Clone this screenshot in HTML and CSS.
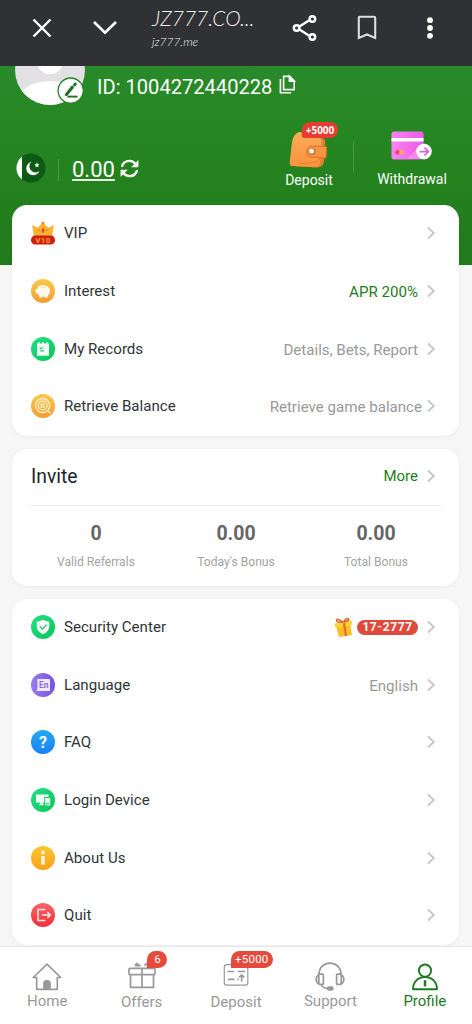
FILE: index.html
```html
<!DOCTYPE html>
<html lang="en">
<head>
<meta charset="utf-8">
<title>Profile</title>
<link rel="stylesheet" href="styles.css">
</head>
<body>
<svg class="defs" width="0" height="0">
  <defs>
    <linearGradient id="gold" x1="0" y1="0" x2="0" y2="1"><stop offset="0" stop-color="#f8c94a"/><stop offset="1" stop-color="#f69c35"/></linearGradient>
    <linearGradient id="amber" x1="0" y1="0" x2="0" y2="1"><stop offset="0" stop-color="#fcc52d"/><stop offset="1" stop-color="#fba11c"/></linearGradient>
    <linearGradient id="green" x1="0" y1="0" x2="1" y2="1"><stop offset="0" stop-color="#25df85"/><stop offset="1" stop-color="#08c558"/></linearGradient>
    <linearGradient id="violet" x1="0" y1="0" x2="1" y2="0"><stop offset="0" stop-color="#9a7cf5"/><stop offset="1" stop-color="#7452df"/></linearGradient>
    <linearGradient id="blue" x1="0" y1="0" x2="0" y2="1"><stop offset="0" stop-color="#22aaf2"/><stop offset="1" stop-color="#1b7ffb"/></linearGradient>
    <linearGradient id="red" x1="0" y1="0" x2="0" y2="1"><stop offset="0" stop-color="#fc6468"/><stop offset="1" stop-color="#f52e37"/></linearGradient>
    <linearGradient id="wallet" x1="0" y1="0" x2="0" y2="1"><stop offset="0" stop-color="#f8ad59"/><stop offset="1" stop-color="#ff913e"/></linearGradient>
    <linearGradient id="pink" x1="0" y1="0" x2="1" y2="0"><stop offset="0" stop-color="#fb82f2"/><stop offset="1" stop-color="#ea5be9"/></linearGradient>
    <symbol id="chev" viewBox="0 0 10 14"><path d="M2 1.5 7.8 7 2 12.5" fill="none" stroke="#c6c6c6" stroke-width="1.8"/></symbol>
  </defs>
</svg>

<header class="bar">
  <svg class="bar-close" width="20" height="20" viewBox="0 0 20 20"><path d="M1.5 1.5 18.5 18.5M18.5 1.5 1.5 18.5" stroke="#fff" stroke-width="2.4"/></svg>
  <svg class="bar-down" width="26" height="16" viewBox="0 0 26 16"><path d="M2 2 13 12.6 24 2" fill="none" stroke="#fff" stroke-width="2.7"/></svg>
  <div class="bar-site"><div class="bar-title">JZ777.CO...</div><div class="bar-url">jz777.me</div></div>
  <svg class="bar-share" width="26" height="28" viewBox="0 0 26 28" fill="none" stroke="#fff" stroke-width="2.4"><path d="M7.5 12.4 17.6 6M7.5 15.6 17.6 22"/><circle cx="4.6" cy="14" r="2.8"/><circle cx="20.4" cy="5" r="2.8"/><circle cx="20.4" cy="23" r="2.8"/></svg>
  <svg class="bar-mark" width="20" height="26" viewBox="0 0 20 26"><path d="M1.8 2.8Q1.8 1.8 2.8 1.8H17.2Q18.2 1.8 18.2 2.8V23L10 19.5 1.8 23Z" fill="none" stroke="#dedede" stroke-width="2.1"/></svg>
  <svg class="bar-more" width="8" height="24" viewBox="0 0 8 24" fill="#fff"><circle cx="4" cy="4.2" r="2.9"/><circle cx="4" cy="12" r="2.9"/><circle cx="4" cy="19.8" r="2.9"/></svg>
</header>

<section class="hero">
  <div class="user">
    <svg class="avatar" width="72" height="40" viewBox="0 0 72 40">
      <defs><clipPath id="face"><circle cx="35" cy="4" r="35"/></clipPath></defs>
      <g clip-path="url(#face)"><path fill="#e2e0e2" d="M0 0H72V40H0Z"/><circle cx="35" cy="-5" r="13.2" fill="#fff"/><ellipse cx="35" cy="35" rx="32" ry="20" fill="#fff"/></g>
      <circle cx="55.7" cy="24.6" r="12.6" fill="#fff" stroke="#24802a" stroke-width="1.3"/>
      <path d="M51.4 28.6 57.3 21.2" stroke="#236f27" stroke-width="3.1" stroke-linecap="round"/><path d="M59.6 18.8 60.2 18" stroke="#236f27" stroke-width="3" stroke-linecap="round"/><path d="M52.5 30.6H62.5" stroke="#236f27" stroke-width="1.9"/>
    </svg>
    <span class="uid">ID: 1004272440228</span>
    <svg class="copy" width="17" height="19" viewBox="0 0 17 19" fill="none" stroke="#fff" stroke-width="1.6"><path d="M4.6 1.4H10.8L15.2 5.8V14.6H4.6Z"/><path d="M10.4 1.4V6.2H15.2Z" fill="#fff"/><path d="M1.4 4V17.8H12.2"/></svg>
  </div>
  <div class="wallet">
    <svg class="flag" width="30" height="30" viewBox="0 0 30 30"><defs><clipPath id="disc"><circle cx="15" cy="15" r="14.6"/></clipPath></defs><g clip-path="url(#disc)"><path fill="#0c5a13" d="M0 0H30V30H0Z"/><path fill="#fff" d="M0 0H6V30H0Z"/></g><path d="M15.5 8.8A6.8 6.8 0 1 0 23.4 18 6 6 0 1 1 15.5 8.8Z" fill="#fff"/><path d="m21 9.3 .7 1.7 1.7.2-1.2 1.3.3 1.8-1.5-.8-1.6.8.3-1.8-1.2-1.3 1.7-.2Z" fill="#fff"/></svg>
    <i class="split"></i>
    <span class="amount">0.00</span>
    <svg class="refresh" width="19" height="19" viewBox="0 0 20 20" fill="none" stroke="#fff" stroke-width="2.4"><path d="M2 8.3C3 4.2 6.3 2 10 2 12.8 2 15 3.3 16.5 5.5M18 11.7C17 15.8 13.7 18 10 18 7.2 18 5 16.7 3.5 14.5"/><path d="M19.4 1V8.6H11.8ZM.6 19V11.4H8.2Z" fill="#fff" stroke="none"/></svg>
    <div class="action action-deposit">
      <svg width="40" height="38" viewBox="0 0 40 38"><path d="M1 34 3 13Q4 4 11 2L33 8Q37 9 36 14L35 31Q34 38 27 37.4L3 36Q1 36 1 34Z" fill="#e77d31"/><path d="M.6 33 3 13Q4 4 10 2L29 7Q33 8 32.5 13L31 33Q30 37.5 26 37L3 36Q.5 35.5 .6 33Z" fill="url(#wallet)"/><path d="M31 29Q27 34 10 33.5" fill="none" stroke="#e77a26" stroke-width="1"/><path d="M37.5 16.5 22 16.2Q17.5 17.5 17.8 22 18 26.5 23 27L37 28Z" fill="#fa9445" stroke="#dd711d" stroke-width="1"/><circle cx="23" cy="21.3" r="3.6" fill="#a97543"/><circle cx="22.6" cy="21" r="2.6" fill="#f3ead7"/></svg>
      <span class="pill">+5000</span>
      <span class="action-name">Deposit</span>
    </div>
    <i class="split split-tall"></i>
    <div class="action action-withdraw">
      <svg width="42" height="30" viewBox="0 0 42 30"><rect x=".5" y=".5" width="32" height="28" rx="2.5" fill="url(#pink)"/><path d="M15 28 32.5 12V28Z" fill="#f488ef"/><path fill="#fff" d="M.5 7H32.5V10.4H.5Z"/><circle cx="6.6" cy="21.2" r="2.3" fill="#e84761"/><circle cx="10.6" cy="21.2" r="2.3" fill="#ffae50"/><circle cx="33" cy="20.6" r="7.8" fill="#fff"/><path d="M28.5 20.6H37M33.5 16.7 37.4 20.6 33.5 24.5" stroke="#df5fdf" stroke-width="1.7" fill="none"/></svg>
      <span class="action-name">Withdrawal</span>
    </div>
  </div>
</section>

<main class="cards">
  <section class="card">
    <div class="row"><svg class="ico" viewBox="0 0 24 24"><path d="M1.2 4 6.6 6.8 12 1.3 17.4 6.8 22.8 4 21 17H3Z" fill="#fbb435"/><circle cx="12" cy="2" r="1.6" fill="#ef8e2b"/><path d="M6.5 9 9.5 9.4M14.5 9.4 17.5 9" stroke="#d9822a" stroke-width="1"/><ellipse cx="12" cy="9.5" rx="1.4" ry="2.4" fill="#dd552a"/><rect y="14.6" width="24" height="9" rx="4.3" fill="#cf1f11"/><text class="vip-num" x="12" y="22">V10</text></svg><span class="name">VIP</span><svg class="chev"><use href="#chev"/></svg></div>
    <div class="row"><svg class="ico" viewBox="0 0 24 24"><circle cx="12" cy="12" r="12" fill="url(#gold)"/><path d="M8 7.5Q10 5.8 13.2 6.2 18.8 7 19 12 19 15 16.5 17V18.8H14.2V17.7H10.7V18.8H8.4V16.8Q6.9 15.9 6.2 14.3L4.5 13.7V10.5L6.2 10Q6.4 8.8 7.1 8.2L6.6 6Z" fill="#fffaf0"/><path d="M10 8.5Q12.5 7.3 15 8.5" fill="none" stroke="#f8cf7c" stroke-width=".8"/></svg><span class="name">Interest</span><span class="value value-green">APR 200%</span><svg class="chev"><use href="#chev"/></svg></div>
    <div class="row"><svg class="ico" viewBox="0 0 24 24"><circle cx="12" cy="12" r="12" fill="url(#green)"/><path d="M6 6.5H18V18.7H6Z" fill="#f4fff9"/><path d="M8 5.3V8M12 5.3V7M16 5.3V8" stroke="#f4fff9" stroke-width="1.6"/><path d="M8.6 10.5 10.2 12 12 10.2M8.6 13.8H13" fill="none" stroke="#40cf83" stroke-width="1.2"/></svg><span class="name">My Records</span><span class="value">Details, Bets, Report</span><svg class="chev"><use href="#chev"/></svg></div>
    <div class="row"><svg class="ico" viewBox="0 0 24 24"><circle cx="12" cy="12" r="12" fill="url(#gold)"/><g fill="none" stroke="#fff1cb" stroke-width="1.3"><circle cx="11.7" cy="11.5" r="7"/><circle cx="11.7" cy="11.5" r="4.4"/><path d="M16.5 16.5 19.5 19.2"/><rect x="10.2" y="10" width="3" height="3"/></g></svg><span class="name">Retrieve Balance</span><span class="value value-wide">Retrieve game balance</span><svg class="chev"><use href="#chev"/></svg></div>
  </section>

  <section class="card invite">
    <div class="invite-head"><h2>Invite</h2><span class="value value-green">More</span><svg class="chev"><use href="#chev"/></svg></div>
    <div class="stats">
      <div class="stat"><b>0</b><span>Valid Referrals</span></div>
      <div class="stat"><b>0.00</b><span>Today's Bonus</span></div>
      <div class="stat"><b>0.00</b><span>Total Bonus</span></div>
    </div>
  </section>

  <section class="card">
    <div class="row"><svg class="ico" viewBox="0 0 24 24"><circle cx="12" cy="12" r="12" fill="url(#green)"/><path d="M12 4.8Q15 6.5 18.3 6.8V11.5Q18 16.5 12 19.2 6 16.5 5.7 11.5V6.8Q9 6.5 12 4.8Z" fill="#f4fff8"/><path d="M8.8 11.3 11.5 13.9 15.6 9.7" fill="none" stroke="#49bc7f" stroke-width="1.4"/></svg><span class="name">Security Center</span><span class="value gift"><svg width="20" height="20" viewBox="0 0 20 20"><path d="M2 8 16 5 18 17 5 19Z" fill="#fcbd27"/><path d="M.5 5.5 17.5 2.5 18.4 7 1.4 9.8Z" fill="#ffd43b"/><path d="M10 5 12 18" stroke="#e0702b" stroke-width="2.2"/><path d="M9 4.2Q3-.5 2.5 2.5 2.4 4.5 9 4.2M9.5 4Q13-1 14.8 1 15.5 3 9.5 4" fill="none" stroke="#d9682b" stroke-width="1.5"/></svg><b class="tag">17-2777</b></span><svg class="chev"><use href="#chev"/></svg></div>
    <div class="row"><svg class="ico" viewBox="0 0 24 24"><circle cx="12" cy="12" r="12" fill="url(#violet)"/><path d="M6.4 6H19V18H5.2L6.4 16Z" fill="#eee9ff"/><text class="lang-mark" x="12.8" y="15.1">En</text></svg><span class="name">Language</span><span class="value">English</span><svg class="chev"><use href="#chev"/></svg></div>
    <div class="row"><svg class="ico" viewBox="0 0 24 24"><circle cx="12" cy="12" r="12" fill="url(#blue)"/><text class="mark" x="12" y="17.7">?</text></svg><span class="name">FAQ</span><svg class="chev"><use href="#chev"/></svg></div>
    <div class="row"><svg class="ico" viewBox="0 0 24 24"><circle cx="12" cy="12" r="12" fill="url(#green)"/><path d="M5 6.6H17.5V9H13.2V14.5H5ZM8.2 16H12.8V17.3H8.2Z" fill="#f1fff7"/><path d="M9 14H12V17H9Z" fill="#f1fff7"/><path d="M14.2 10H19.2V17.5H14.2Z" fill="#e9fff1"/><path d="M15.5 17.2V15.5H18" fill="none" stroke="#2acb71" stroke-width=".9"/></svg><span class="name">Login Device</span><svg class="chev"><use href="#chev"/></svg></div>
    <div class="row"><svg class="ico" viewBox="0 0 24 24"><circle cx="12" cy="12" r="12" fill="url(#amber)"/><circle cx="12" cy="6.5" r="1.9" fill="#fff8dd"/><path d="M10.2 10H13.7V18.7H10.2Z" fill="#fff8dd"/></svg><span class="name">About Us</span><svg class="chev"><use href="#chev"/></svg></div>
    <div class="row"><svg class="ico" viewBox="0 0 24 24"><circle cx="12" cy="12" r="12" fill="url(#red)"/><path d="M14.3 6.4H7V17.6H14.3M10.8 12H19M16.3 9 19.3 12 16.3 15" fill="none" stroke="#ffeded" stroke-width="1.5"/></svg><span class="name">Quit</span><svg class="chev"><use href="#chev"/></svg></div>
  </section>
</main>

<nav class="tabs">
  <div class="tab tab-high"><svg width="32" height="30" viewBox="0 0 32 30" fill="none" stroke="#999" stroke-width="1.7" stroke-linejoin="round"><path d="M5.7 15.5H2.3L16 2.2 29.7 15.5H26.3V27.3H5.7Z"/><path d="M13 27V21Q13 18.8 16 18.8T19 21V27Z" fill="#999"/></svg><span>Home</span></div>
  <div class="tab"><svg width="32" height="30" viewBox="0 0 32 30" fill="none" stroke="#999" stroke-width="1.7"><rect x="3" y="6.3" width="26" height="6.4" rx="1"/><path d="M4.5 12.7V25.4H27.5V12.7M16 6.3V25.4M8.7 3.4 11.2 1.5 13.5 3.5 9 3.8M18.5 3.5 21 1.5 23 3.5"/></svg><i class="badge badge-num">6</i><span>Offers</span></div>
  <div class="tab"><svg width="32" height="30" viewBox="0 0 32 30" fill="none" stroke="#999"><rect x="4.3" y="2.7" width="23.5" height="20.5" rx="2.4" stroke-width="1.2"/><path d="M7.5 9.5H14M8 17.3H14.5M17.7 9.5H25M17.3 17.3H18.8M21.7 19.4V13M19.2 15.4 21.7 12.9 24.2 15.4" stroke-width="1.7"/></svg><i class="badge badge-sum">+5000</i><span>Deposit</span></div>
  <div class="tab tab-high"><svg width="32" height="30" viewBox="0 0 32 30" fill="none" stroke="#999" stroke-width="1.7"><path d="M5 12.5C5 5.5 10 1.2 16 1.2S27 5.5 27 12.5"/><rect x="4.8" y="12.2" width="4.6" height="10.2" rx="1"/><rect x="22.6" y="12.2" width="4.6" height="10.2" rx="1"/><path d="M4.8 13Q2.2 14 2.2 17.3T4.8 21.8M27.2 13Q29.8 14 29.8 17.3T27.2 21.8M7 22.5Q8.5 26 13.5 26.5"/><rect x="13.6" y="25" width="5.3" height="3" rx="1.4" fill="#999"/></svg><span>Support</span></div>
  <div class="tab tab-high tab-on"><svg width="32" height="30" viewBox="0 0 32 30" fill="none" stroke="#1c7b1f" stroke-width="1.9"><circle cx="16" cy="8.6" r="6.1"/><path d="M4 27.2C4 20 9 15 16 15S28 20 28 27.2Z" stroke-linejoin="round"/><path d="M16 18.2V24.4" stroke-width="2.5"/></svg><span>Profile</span></div>
</nav>
</body>
</html>
```
FILE: styles.css
```css
* { box-sizing: border-box; }
body { margin: 0; width: 472px; height: 1024px; overflow: hidden; background: #f6f6f6; color: #303538; font-family: Roboto, "Liberation Sans", sans-serif; font-size: 15px; display: flex; flex-direction: column; }
svg { display: block; flex: none; overflow: visible; }
.defs { position: absolute; }
i { font-style: normal; }

.bar { height: 66px; flex: none; background: #303134; display: flex; align-items: flex-start; padding-left: 32px; z-index: 2; }
.bar-close { margin-top: 18px; }
.bar-down { margin: 20px 0 0 40px; }
.bar-site { width: 108px; margin: 5px 0 0 34px; color: #f0f0f0; font-family: Lato, sans-serif; font-style: italic; font-weight: 300; white-space: nowrap; }
.bar-title { font-size: 21px; line-height: 26px; }
.bar-url { font-size: 12px; line-height: 17px; margin-top: 2px; }
.bar-share { margin: 14px 0 0 32px; }
.bar-mark { margin: 15px 0 0 39px; }
.bar-more { margin: 16px 0 0 49px; }

.hero { height: 199px; flex: none; background: linear-gradient(#298a2b, #25851f 40%, #217a1c); color: #fff; }
.user { display: flex; height: 42px; padding-left: 15px; }
.uid { margin-left: 10px; font-size: 20.1px; line-height: 42px; }
.copy { margin: 9px 0 0 7px; }
.wallet { display: flex; align-items: flex-start; padding: 0 0 0 16px; height: 157px; }
.flag { margin-top: 45px; }
.split { width: 1px; height: 22px; background: #469c45; margin: 51px 0 0 12px; }
.amount { margin: 47px 0 0 13px; width: 43px; height: 26px; font-size: 22px; line-height: 29px; border-bottom: 2px solid #e8f4e8; white-space: nowrap; }
.refresh { margin: 51px 1px 0 5px; }
.action { position: relative; display: flex; flex-direction: column; align-items: center; font-size: 14px; line-height: 18px; }
.action-deposit { width: 60px; margin: 22px 0 0 139px; }
.action-deposit .action-name { margin-top: 3px; }
.pill { position: absolute; left: 23px; top: -8px; height: 16px; width: 36px; border-radius: 8px 8px 8px 2px; background: #e83b32; font: 700 10px/16px "Open Sans", sans-serif; text-align: center; }
.split-tall { height: 32px; margin: 33px 0 0 14px; }
.action-withdraw { width: 74px; margin: 23px 0 0 21px; }
.action-withdraw .action-name { margin-top: 9px; }

.cards { display: flex; flex-direction: column; gap: 13px; margin: -60px 13px 0 12px; }
.card { background: #fff; border-radius: 15px; box-shadow: 0 1px 4px rgba(0, 0, 0, .05); padding: 0 23px 0 19px; }
.row { height: 57.67px; padding-bottom: 1px; display: flex; align-items: center; }
.ico { width: 24px; height: 24px; }
.name { margin-left: 9px; font-size: 15.1px; }
.chev { width: 10px; height: 14px; margin-left: 8px; }
.row .name + .chev { margin-left: auto; }
.value { margin-left: auto; font-size: 15.1px; color: #999; position: relative; top: 1px; }
.value-wide { margin-right: -4px; }
.value-green { color: #1f7d22; }
.gift { display: flex; align-items: center; gap: 3px; }
.tag { width: 61px; height: 15px; border-radius: 8px; background: #df4a3d; color: #fff; text-align: center; font: 700 12px/15px Roboto, sans-serif; letter-spacing: .6px; }
.vip-num { font: 700 8px Roboto, sans-serif; fill: #ffa036; text-anchor: middle; letter-spacing: .4px; }
.lang-mark { font: 700 8.5px Roboto, sans-serif; fill: #8b6bde; text-anchor: middle; }
.mark { font: 700 16px Roboto, sans-serif; fill: #fff; text-anchor: middle; }

.invite { height: 137px; }
.invite-head { height: 57px; padding-bottom: 1px; display: flex; align-items: center; border-bottom: 1px solid #ebebeb; margin-right: -5px; padding-right: 5px; }
.invite h2 { margin: 0; font-size: 19.3px; font-weight: 400; color: #202528; }
.invite .value { font-size: 15px; top: 0; }
.stats { display: flex; margin: 0 -10px 0 -5px; }
.stat { flex: 1; display: flex; flex-direction: column; align-items: center; padding-top: 16px; }
.stat b { font-size: 19.5px; line-height: 24px; color: #666; }
.stat span { font-size: 12.1px; line-height: 16px; margin-top: 8px; color: #a3a3a3; }

.tabs { height: 78px; flex: none; margin-top: auto; background: #fff; border-top: 1px solid #e8e8e8; display: flex; z-index: 1; }
.tab { flex: 1; position: relative; padding-top: 15px; display: flex; flex-direction: column; align-items: center; color: #999; font-size: 15px; line-height: 18px; }
.tab span { margin-top: 1px; }
.tab-high span { margin-top: 0; }
.tab-on { color: #1c7b1f; }
.badge { position: absolute; top: 4px; height: 17px; border-radius: 9px 9px 9px 0; background: #e64a3c; color: #fff; font-size: 11.5px; line-height: 16px; text-align: center; }
.badge-num { left: 53px; width: 20px; }
.badge-sum { left: 42px; width: 42px; letter-spacing: .2px; }
```
